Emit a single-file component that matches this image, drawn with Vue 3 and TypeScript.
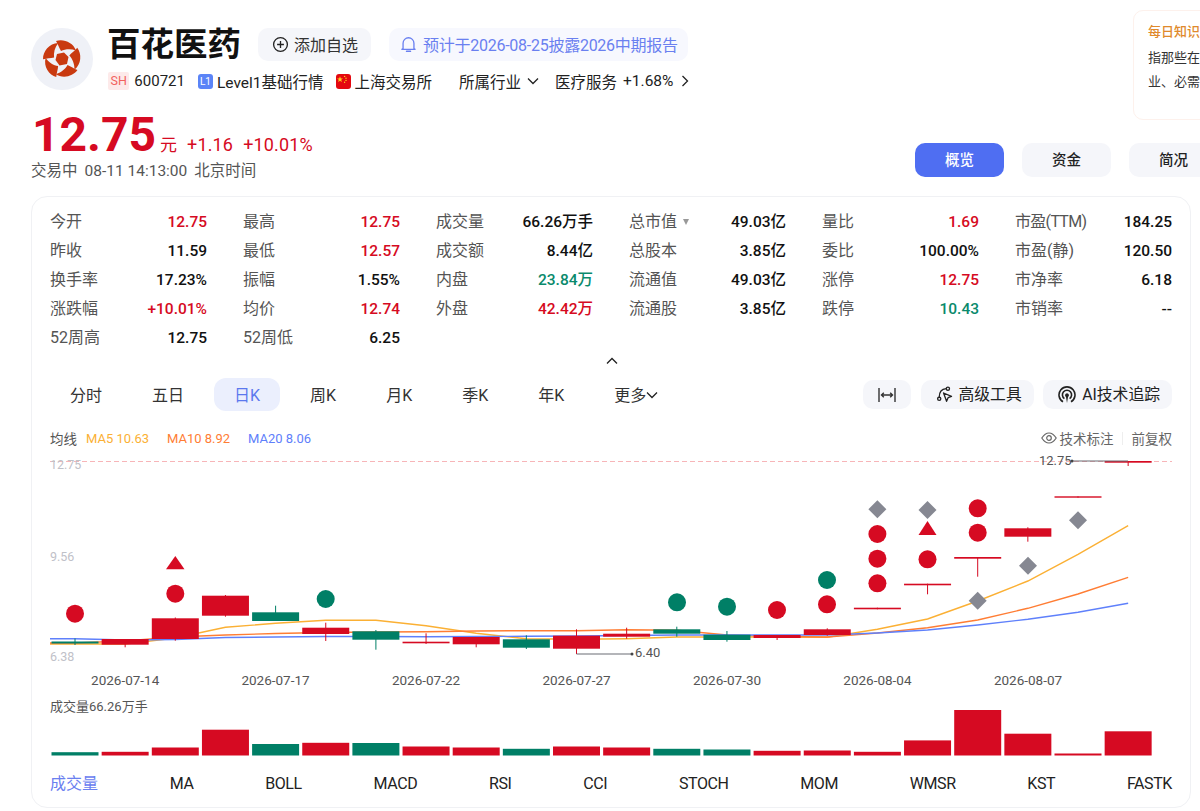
<template>
  <div class="page">
    <div class="top">
      <div class="top-left">
        <div class="head">
          <div class="logo">
            <svg viewBox="-31 -31 62 62" width="62" height="62">
              <g fill="#c93a10">
                <path d="M-5 -5 L2 -6.500 L6.500 -2 L5 5 L-2.500 6.500 L-6.500 1 Z" />
                <path
                  v-for="a in [0, 72, 144, 216, 288]"
                  :key="a"
                  :transform="`rotate(${a})`"
                  d="M-6 -18 C1 -20.500 11 -17 14 -8.500 C9 -10.500 3 -10 -1 -8 C-3 -11 -4 -15 -6 -18 Z"
                />
              </g>
            </svg>
          </div>
          <div class="info">
            <div class="title-row">
              <h1 class="name">百花医药</h1>
              <div class="add-btn">
                <svg viewBox="0 0 18 18" width="17" height="17" fill="none" stroke="#222" stroke-width="1.4">
                  <circle cx="9" cy="9" r="7.300" />
                  <path d="M5.400 9h7.200M9 5.400v7.200" />
                </svg>
                <span>添加自选</span>
              </div>
              <div class="notice">
                <svg viewBox="0 0 16 18" width="15" height="17" fill="none" stroke="#6a80f0" stroke-width="1.4">
                  <path d="M2.200 13.200V7.600a5.800 5.800 0 0 1 11.600 0v5.600l1.200 1H1z" stroke-linejoin="round" />
                  <path d="M6 16.200h4" stroke-linecap="round" stroke-width="1.8" />
                </svg>
                <span>预计于2026-08-25披露2026中期报告</span>
              </div>
            </div>
            <div class="meta-row">
              <span class="badge-sh">SH</span>
              <span class="code">600721</span>
              <span class="badge-l1">L1</span>
              <span class="level">Level1基础行情</span>
              <span class="flag">
                <svg viewBox="0 0 15 15" width="15" height="15">
                  <rect width="15" height="15" fill="#e4080f" />
                  <path d="M4 2.200l.8 2.200 2.200.1-1.800 1.300.7 2.200L4 6.700 2.100 8l.7-2.200L1 4.500l2.200-.1z" fill="#ffd21f" />
                  <circle cx="8.600" cy="2.400" r=".7" fill="#ffd21f" />
                  <circle cx="10" cy="4.200" r=".7" fill="#ffd21f" />
                  <circle cx="10" cy="6.400" r=".7" fill="#ffd21f" />
                  <circle cx="8.600" cy="8.200" r=".7" fill="#ffd21f" />
                </svg>
              </span>
              <span class="exchange">上海交易所</span>
              <span class="industry">所属行业</span>
              <svg class="chev-down" viewBox="0 0 12 8" width="12" height="8" fill="none" stroke="#222" stroke-width="1.3">
                <path d="M1 1.500l5 5 5-5" />
              </svg>
              <span class="sector">医疗服务</span>
              <span class="sector-pct">+1.68%</span>
              <svg class="chev-right" viewBox="0 0 8 12" width="8" height="12" fill="none" stroke="#222" stroke-width="1.3">
                <path d="M1.500 1l5 5-5 5" />
              </svg>
            </div>
          </div>
        </div>
        <div class="price-row">
          <span class="price">12.75</span>
          <span class="unit">元</span>
          <span class="chg">+1.16</span>
          <span class="chg pct">+10.01%</span>
        </div>
        <div class="status">
          <span>交易中</span>
          <span>08-11 14:13:00</span>
          <span>北京时间</span>
        </div>
      </div>
      <div class="top-right">
        <div class="tip">
          <div class="tip-title">每日知识</div>
          <div class="tip-text">指那些在经济周期中表现稳定的行</div>
          <div class="tip-text">业、必需消费品和公用事业等</div>
        </div>
        <div class="nav">
          <div v-for="(n, i) in navs" :key="n" class="nav-item" :class="{ active: i === 0 }">{{ n }}</div>
        </div>
      </div>
    </div>

    <section class="card">
      <div class="stats">
        <div v-for="(s, i) in stats" :key="i" class="stat">
          <span class="stat-label" :class="{ tight: s.label === '市盈(TTM)' }">
            {{ s.label }}
            <i v-if="s.label === '总市值'" class="caret"></i>
          </span>
          <span class="stat-value" :class="s.tone">{{ s.value }}</span>
        </div>
      </div>
      <div class="collapse">
        <svg viewBox="0 0 12 8" width="12" height="8" fill="none" stroke="#222" stroke-width="1.3">
          <path d="M1 6.500l5-5 5 5" />
        </svg>
      </div>

      <div class="toolbar">
        <div class="periods">
          <div v-for="p in periods" :key="p" class="period" :class="{ active: p === '日K' }">
            {{ p }}
            <svg v-if="p === '更多'" viewBox="0 0 12 8" width="12" height="8" fill="none" stroke="#222" stroke-width="1.3">
              <path d="M1 1.500l5 5 5-5" />
            </svg>
          </div>
        </div>
        <div class="tools">
          <div class="tool tool-icon">
            <svg viewBox="0 0 18 14" width="18" height="14" fill="none" stroke="#333" stroke-width="1.4">
              <path d="M1 0v14M17 0v14M3.500 7h11M5.800 4.800 3.500 7l2.300 2.200M12.200 4.800l2.300 2.200-2.300 2.200" />
            </svg>
          </div>
          <div class="tool">
            <svg viewBox="0 0 18 18" width="17" height="17" fill="none" stroke="#222" stroke-width="1.4">
              <circle cx="3.400" cy="13.600" r="1.700" />
              <circle cx="12.600" cy="2.800" r="1.700" />
              <path d="M3.400 11.800C3.400 6.800 6 3.200 10.800 2.800" />
              <path d="M8 7.400l8.400 3.600-3.600 1.400-1.600 3.800z" stroke-linejoin="round" />
            </svg>
            <span>高级工具</span>
          </div>
          <div class="tool">
            <svg viewBox="0 0 18 18" width="18" height="18" fill="none" stroke="#222" stroke-width="1.6">
              <path d="M5 15.800a8 8 0 1 1 8 0" />
              <path d="M6.400 12.600a4.600 4.600 0 1 1 5.200 0" />
              <path d="M9 7.300a2 2 0 0 1 1 3.700L9 17 8 11a2 2 0 0 1 1-3.700z" fill="#222" stroke="none" />
            </svg>
            <span>AI技术追踪</span>
          </div>
        </div>
      </div>

      <div class="legend">
        <span class="legend-title">均线</span>
        <span class="ma5">MA5 10.63</span>
        <span class="ma10">MA10 8.92</span>
        <span class="ma20">MA20 8.06</span>
        <span class="legend-right">
          <svg viewBox="0 0 16 12" width="16" height="12" fill="none" stroke="#666" stroke-width="1.2">
            <path d="M.8 6C3 2.600 5.200 1 8 1s5 1.600 7.200 5C13 9.400 10.800 11 8 11S3 9.400.8 6z" />
            <circle cx="8" cy="6" r="2.300" />
          </svg>
          <span>技术标注</span>
          <i class="divider"></i>
          <span>前复权</span>
        </span>
      </div>

      <svg class="chart" viewBox="50 452 1122 238" width="1122" height="238">
        <line x1="50" x2="1172" y1="461.500" y2="461.500" stroke="#f7b5b8" stroke-width="1" stroke-dasharray="5 3" />
        <text x="50" y="469" class="axis">12.75</text>
        <text x="50" y="561" class="axis">9.56</text>
        <text x="50" y="661" class="axis">6.38</text>

        <polyline :points="linePoints(ma5)" fill="none" stroke="#fbb034" stroke-width="1.4" />
        <polyline :points="linePoints(ma10)" fill="none" stroke="#ff7d34" stroke-width="1.4" />
        <polyline :points="linePoints(ma20)" fill="none" stroke="#5f80fb" stroke-width="1.4" />

        <g v-for="(c, i) in candles" :key="'c' + i">
          <line :x1="centers[i]" :x2="centers[i]" :y1="c.high" :y2="c.low" :stroke="c.up ? RED : GREEN" stroke-width="1" />
          <rect
            :x="centers[i] - 23.500"
            :y="c.top"
            width="47"
            :height="c.bottom - c.top"
            :fill="c.up ? RED : GREEN"
          />
        </g>

        <circle
          v-for="(m, i) in dots"
          :key="'d' + i"
          :cx="m.x"
          :cy="m.y"
          r="9"
          :fill="m.green ? GREEN : RED"
        />
        <polygon points="175.300,556 184.500,569.300 166,569.300" :fill="RED" />
        <polygon points="927.500,521 936.500,535 918.500,535" :fill="RED" />
        <polygon
          v-for="(d, i) in diamonds"
          :key="'m' + i"
          :points="`${d.x},${d.y - 9} ${d.x + 9},${d.y} ${d.x},${d.y + 9} ${d.x - 9},${d.y}`"
          fill="#868892"
        />

        <polyline points="1072,461 1128,461" fill="none" stroke="#6b6c74" stroke-width="1.2" />
        <circle cx="1072" cy="461" r="1.500" fill="#444" />
        <text x="1039" y="464.500" class="mark">12.75</text>
        <polyline points="576.500,654 632,654" fill="none" stroke="#6b6c74" stroke-width="1.2" />
        <circle cx="632" cy="654" r="1.500" fill="#444" />
        <text x="635" y="657" class="mark">6.40</text>

        <text v-for="d in dates" :key="d.t" :x="d.x" y="685" text-anchor="middle" class="date">{{ d.t }}</text>
      </svg>

      <div class="vol-label">成交量66.26万手</div>
      <svg class="volume" viewBox="50 708 1122 50" width="1122" height="50">
        <rect
          v-for="(v, i) in volumes"
          :key="i"
          :x="centers[i] - 23.500"
          :y="v.top"
          width="47"
          :height="755.500 - v.top"
          :fill="v.up ? RED : GREEN"
        />
      </svg>

      <div class="indicators">
        <span v-for="n in indicators" :key="n" :class="{ active: n === '成交量' }">{{ n }}</span>
      </div>
    </section>
  </div>
</template>

<script setup lang="ts">
interface Stat {
  label: string;
  value: string;
  tone?: string;
}

const RED = '#d60a22';
const GREEN = '#007f66';

const navs = ['概览', '资金', '简况'];
const periods = ['分时', '五日', '日K', '周K', '月K', '季K', '年K', '更多'];
const indicators = ['成交量', 'MA', 'BOLL', 'MACD', 'RSI', 'CCI', 'STOCH', 'MOM', 'WMSR', 'KST', 'FASTK'];

const stats: Stat[] = [
  { label: '今开', value: '12.75', tone: 'up' },
  { label: '最高', value: '12.75', tone: 'up' },
  { label: '成交量', value: '66.26万手' },
  { label: '总市值', value: '49.03亿' },
  { label: '量比', value: '1.69', tone: 'up' },
  { label: '市盈(TTM)', value: '184.25' },
  { label: '昨收', value: '11.59' },
  { label: '最低', value: '12.57', tone: 'up' },
  { label: '成交额', value: '8.44亿' },
  { label: '总股本', value: '3.85亿' },
  { label: '委比', value: '100.00%' },
  { label: '市盈(静)', value: '120.50' },
  { label: '换手率', value: '17.23%' },
  { label: '振幅', value: '1.55%' },
  { label: '内盘', value: '23.84万', tone: 'down' },
  { label: '流通值', value: '49.03亿' },
  { label: '涨停', value: '12.75', tone: 'up' },
  { label: '市净率', value: '6.18' },
  { label: '涨跌幅', value: '+10.01%', tone: 'up' },
  { label: '均价', value: '12.74', tone: 'up' },
  { label: '外盘', value: '42.42万', tone: 'up' },
  { label: '流通股', value: '3.85亿' },
  { label: '跌停', value: '10.43', tone: 'down' },
  { label: '市销率', value: '--' },
  { label: '52周高', value: '12.75' },
  { label: '52周低', value: '6.25' }
];

// x position of each trading day, page coordinates
const centers = Array.from({ length: 22 }, (_, i) => 75 + i * 50.15);

const candles = [
  { up: false, top: 641.5, bottom: 643.5, high: 638.5, low: 645 },
  { up: true, top: 639, bottom: 644.7, high: 639, low: 647.3 },
  { up: true, top: 618.3, bottom: 639, high: 617.5, low: 640.7 },
  { up: true, top: 595.7, bottom: 615.7, high: 595, low: 616.7 },
  { up: false, top: 612.3, bottom: 621, high: 605.7, low: 621 },
  { up: true, top: 627.7, bottom: 634, high: 622.7, low: 641 },
  { up: false, top: 631.3, bottom: 639.7, high: 630, low: 649.7 },
  { up: true, top: 641.7, bottom: 643.3, high: 633.3, low: 644 },
  { up: true, top: 637, bottom: 644.3, high: 637, low: 647.3 },
  { up: false, top: 639.3, bottom: 647.7, high: 635.3, low: 649 },
  { up: true, top: 635.7, bottom: 648.7, high: 629.3, low: 654 },
  { up: true, top: 633.7, bottom: 636.7, high: 627.7, low: 638.7 },
  { up: false, top: 629.3, bottom: 633.7, high: 626.7, low: 636.7 },
  { up: false, top: 634.7, bottom: 640, high: 631, low: 641.7 },
  { up: true, top: 635, bottom: 638, high: 635, low: 640 },
  { up: true, top: 629.3, bottom: 635, high: 628.3, low: 635.7 },
  { up: true, top: 607.7, bottom: 609.3, high: 607.7, low: 609.3 },
  { up: true, top: 583.7, bottom: 585.3, high: 583.7, low: 594.3 },
  { up: true, top: 557, bottom: 558.7, high: 557, low: 576.7 },
  { up: true, top: 528.3, bottom: 536.7, high: 527.3, low: 541.7 },
  { up: true, top: 496.3, bottom: 497.7, high: 496.3, low: 497.7 },
  { up: true, top: 461, bottom: 462.7, high: 461, low: 466 }
];

const ma5 = [644, 644, 638, 627.3, 623.3, 620.3, 620.3, 625.7, 633.3, 638.7, 639.3, 638.7, 637, 637, 637, 637.3, 629.3, 619, 601, 581, 554.3, 525.7];
const ma10 = [643, 641, 637, 635, 633.5, 632.5, 632, 631.7, 631, 630.7, 630.7, 629.7, 630.3, 635, 636.5, 637, 633, 627.7, 620, 608.3, 594, 577.3];
const ma20 = [638.7, 640, 639.5, 637.5, 637, 636.5, 636.5, 636.7, 636.5, 636.3, 636, 635.5, 635, 635, 635, 635, 633, 630, 625, 619.3, 612.3, 603.3];

const linePoints = (values: number[]): string => {
  const pts = values.map((y, i) => `${centers[i]},${y}`);
  return [`50,${values[0]}`, ...pts].join(' ');
};

const dots = [
  { x: 75, y: 613.7 },
  { x: 175.3, y: 593.7 },
  { x: 325.7, y: 599, green: true },
  { x: 677, y: 602.3, green: true },
  { x: 727, y: 606.7, green: true },
  { x: 777, y: 610 },
  { x: 827, y: 580, green: true },
  { x: 827, y: 604.3 },
  { x: 877.4, y: 534 },
  { x: 877.4, y: 558.7 },
  { x: 877.4, y: 583.3 },
  { x: 927.5, y: 559.3 },
  { x: 977.7, y: 508.3 },
  { x: 977.7, y: 532.7 }
];

const diamonds = [
  { x: 877.4, y: 509.3 },
  { x: 927.5, y: 510 },
  { x: 977.7, y: 600.7 },
  { x: 1028, y: 565.7 },
  { x: 1078, y: 520.3 }
];

const dates = [
  { t: '2026-07-14', x: 125.2 },
  { t: '2026-07-17', x: 275.5 },
  { t: '2026-07-22', x: 426 },
  { t: '2026-07-27', x: 576.5 },
  { t: '2026-07-30', x: 727 },
  { t: '2026-08-04', x: 877.4 },
  { t: '2026-08-07', x: 1028 }
];

const volumes = [
  { up: false, top: 752.2 },
  { up: true, top: 751.8 },
  { up: true, top: 747.5 },
  { up: true, top: 729.7 },
  { up: false, top: 744 },
  { up: true, top: 742.8 },
  { up: false, top: 743 },
  { up: true, top: 746.5 },
  { up: true, top: 747.5 },
  { up: false, top: 748.8 },
  { up: true, top: 746.5 },
  { up: true, top: 747.5 },
  { up: false, top: 748.8 },
  { up: false, top: 749.5 },
  { up: true, top: 750.8 },
  { up: true, top: 750.5 },
  { up: true, top: 751.8 },
  { up: true, top: 740.4 },
  { up: true, top: 710 },
  { up: true, top: 733.7 },
  { up: true, top: 753.5 },
  { up: true, top: 731.3 }
];
</script>

<style scoped>
.page {
  width: 1200px;
  height: 811px;
  padding: 10px 0 0 31px;
  box-sizing: border-box;
  overflow: hidden;
  background: #fff;
  color: #222;
  font-family: Roboto, "Noto Sans CJK SC", sans-serif;
  font-size: 16px;
}

.top {
  display: flex;
  height: 170px;
}

.top-left {
  flex: 0 0 884px;
  padding-top: 18px;
}

.head {
  display: flex;
  gap: 14px;
}

.logo {
  width: 62px;
  height: 62px;
  border-radius: 50%;
  background: #eff1f7;
}

.title-row {
  display: flex;
  align-items: center;
  height: 33px;
}

.name {
  margin: 0 17px 0 0;
  font-size: 33.5px;
  line-height: 33px;
  font-weight: 700;
  color: #111;
}

.add-btn,
.notice {
  display: flex;
  align-items: center;
  height: 33px;
  padding-bottom: 2px;
  box-sizing: border-box;
  border-radius: 10px;
}

.add-btn svg,
.notice svg {
  margin-top: 2px;
}

.add-btn {
  gap: 5px;
  padding-left: 14px;
  padding-right: 13px;
  background: #f5f6fa;
  color: #333;
}

.notice {
  gap: 7px;
  margin-left: 18px;
  padding-left: 12px;
  padding-right: 10px;
  background: #f7f8fe;
  color: #6a80f0;
  letter-spacing: -0.26px;
}

.meta-row {
  display: flex;
  align-items: center;
  height: 22px;
  margin-top: 9px;
  padding-left: 1px;
  font-size: 15.5px;
  color: #222;
}

.badge-sh {
  padding: 0 2.5px;
  height: 18px;
  line-height: 18px;
  font-size: 12.5px;
  color: #f2625f;
  background: #fdeaea;
  border-radius: 2px;
}

.code {
  margin-left: 5px;
  font-size: 15px;
}

.badge-l1 {
  width: 15px;
  height: 15px;
  margin-left: 13px;
  border-radius: 3px;
  background: #5b84f7;
  color: #fff;
  font-size: 10px;
  line-height: 15px;
  text-align: center;
}

.level {
  margin-left: 4px;
}

.flag {
  display: block;
  width: 15px;
  height: 15px;
  margin-left: 12px;
  border-radius: 3px;
  overflow: hidden;
}

.flag svg {
  display: block;
}

.exchange {
  margin-left: 4px;
}

.industry {
  margin-left: 27px;
}

.chev-down {
  margin-left: 6px;
}

.sector {
  margin-left: 16px;
}

.sector-pct {
  margin-left: 6px;
}

.chev-right {
  margin-left: 8px;
}

.price-row {
  display: flex;
  align-items: baseline;
  height: 50px;
  margin-top: 18px;
  padding-left: 1px;
  color: #d60a22;
  font-size: 18px;
}

.price {
  font-size: 48px;
  line-height: 50px;
  font-weight: 700;
}

.unit {
  margin-left: 4px;
  font-size: 17px;
}

.chg {
  margin-left: 10px;
  letter-spacing: 0.15px;
}

.status {
  display: flex;
  gap: 7px;
  height: 20px;
  margin-top: 1px;
  line-height: 20px;
  font-size: 15.5px;
  color: #555;
}

.top-right {
  flex: 0 0 400px;
}

.tip {
  height: 110px;
  margin-left: 218px;
  padding: 11px 14px;
  box-sizing: border-box;
  border: 1px solid #fdf1ec;
  border-radius: 10px;
  font-size: 13px;
  white-space: nowrap;
  overflow: hidden;
}

.tip-title {
  height: 20px;
  line-height: 20px;
  color: #e08a2c;
  font-weight: 500;
}

.tip-text {
  height: 24px;
  line-height: 24px;
  color: #333;
}

.tip-title + .tip-text {
  margin-top: 4px;
}

.nav {
  display: flex;
  gap: 18px;
  margin-top: 23px;
}

.nav-item {
  width: 89px;
  height: 34px;
  line-height: 35px;
  text-align: center;
  border-radius: 10px;
  background: #f5f6fa;
  font-weight: 500;
  font-size: 14.5px;
  color: #222;
}

.nav-item.active {
  background: #4f6ef2;
  color: #fff;
}

.card {
  width: 1160px;
  margin-top: 16px;
  padding: 10px 18px 13px;
  box-sizing: border-box;
  border: 1px solid #f0f1f4;
  border-radius: 16px;
}

.stats {
  display: grid;
  grid-template-columns: repeat(6, 157px);
  grid-auto-rows: 29px;
  column-gap: 36px;
}

.stat {
  display: flex;
  align-items: center;
  justify-content: space-between;
  line-height: 20px;
  white-space: nowrap;
}

.stat-label {
  color: #555;
}

.stat-label.tight {
  letter-spacing: -0.7px;
}

.stat-value {
  font-size: 15.5px;
  font-weight: 500;
  color: #111;
}

.stat-value.up {
  color: #d60a22;
}

.stat-value.down {
  color: #0a8a6c;
}

.caret {
  display: inline-block;
  margin-left: 2px;
  vertical-align: 2px;
  border-left: 3.5px solid transparent;
  border-right: 3.5px solid transparent;
  border-top: 6px solid #999;
}

.collapse {
  display: flex;
  align-items: center;
  justify-content: center;
  height: 18px;
  margin-bottom: 8px;
  padding-left: 2px;
}

.toolbar {
  display: flex;
  align-items: center;
  justify-content: space-between;
  height: 33px;
}

.periods {
  display: flex;
  gap: 10px;
}

.period {
  display: flex;
  align-items: center;
  height: 33px;
  padding: 0 20px 2px;
  box-sizing: border-box;
  border-radius: 12px;
  color: #333;
}

.period svg {
  margin-top: 2px;
}

.period.active {
  background: #ebeffd;
  color: #5b78ee;
}

.tools {
  display: flex;
  gap: 9.5px;
}

.tool {
  display: flex;
  align-items: center;
  gap: 6px;
  height: 29px;
  padding: 0 12px 2px 15px;
  box-sizing: border-box;
  border-radius: 10px;
  background: #f5f6fa;
  font-size: 15.8px;
  color: #222;
}

.tool svg {
  margin-top: 2px;
}

.tool-icon {
  padding: 0 15px;
}

.tool-icon svg {
  margin-top: 0;
}

.legend {
  display: flex;
  align-items: center;
  height: 18px;
  margin-top: 18px;
  font-size: 13px;
}

.legend-title {
  width: 36px;
  font-size: 13.5px;
  color: #555;
}

.ma5 {
  width: 81px;
  color: #fbb034;
}

.ma10 {
  width: 81px;
  color: #ff7d34;
}

.ma20 {
  color: #5f80fb;
}

.legend-right {
  display: flex;
  align-items: center;
  gap: 3px;
  margin-left: auto;
  font-size: 13.5px;
  color: #666;
}

.divider {
  width: 1px;
  height: 13px;
  margin: 0 5.5px;
  background: #eee;
}

.chart {
  display: block;
  margin-top: 5px;
}

.axis {
  font-size: 12.5px;
  fill: #bfc1c8;
}

.mark {
  font-size: 13px;
  fill: #555;
}

.date {
  font-size: 13.5px;
  fill: #555;
}

.vol-label {
  height: 18px;
  line-height: 18px;
  margin-top: 8px;
  font-size: 13px;
  color: #555;
}

.volume {
  display: block;
  margin-top: -8px;
}

.indicators {
  display: flex;
  justify-content: space-between;
  height: 20px;
  line-height: 20px;
  margin-top: 16px;
  color: #222;
  letter-spacing: -0.4px;
}

.indicators .active {
  color: #6a80f0;
  letter-spacing: 0;
}
</style>

<style>
html,
body {
  margin: 0;
  background: #fff;
}
</style>
